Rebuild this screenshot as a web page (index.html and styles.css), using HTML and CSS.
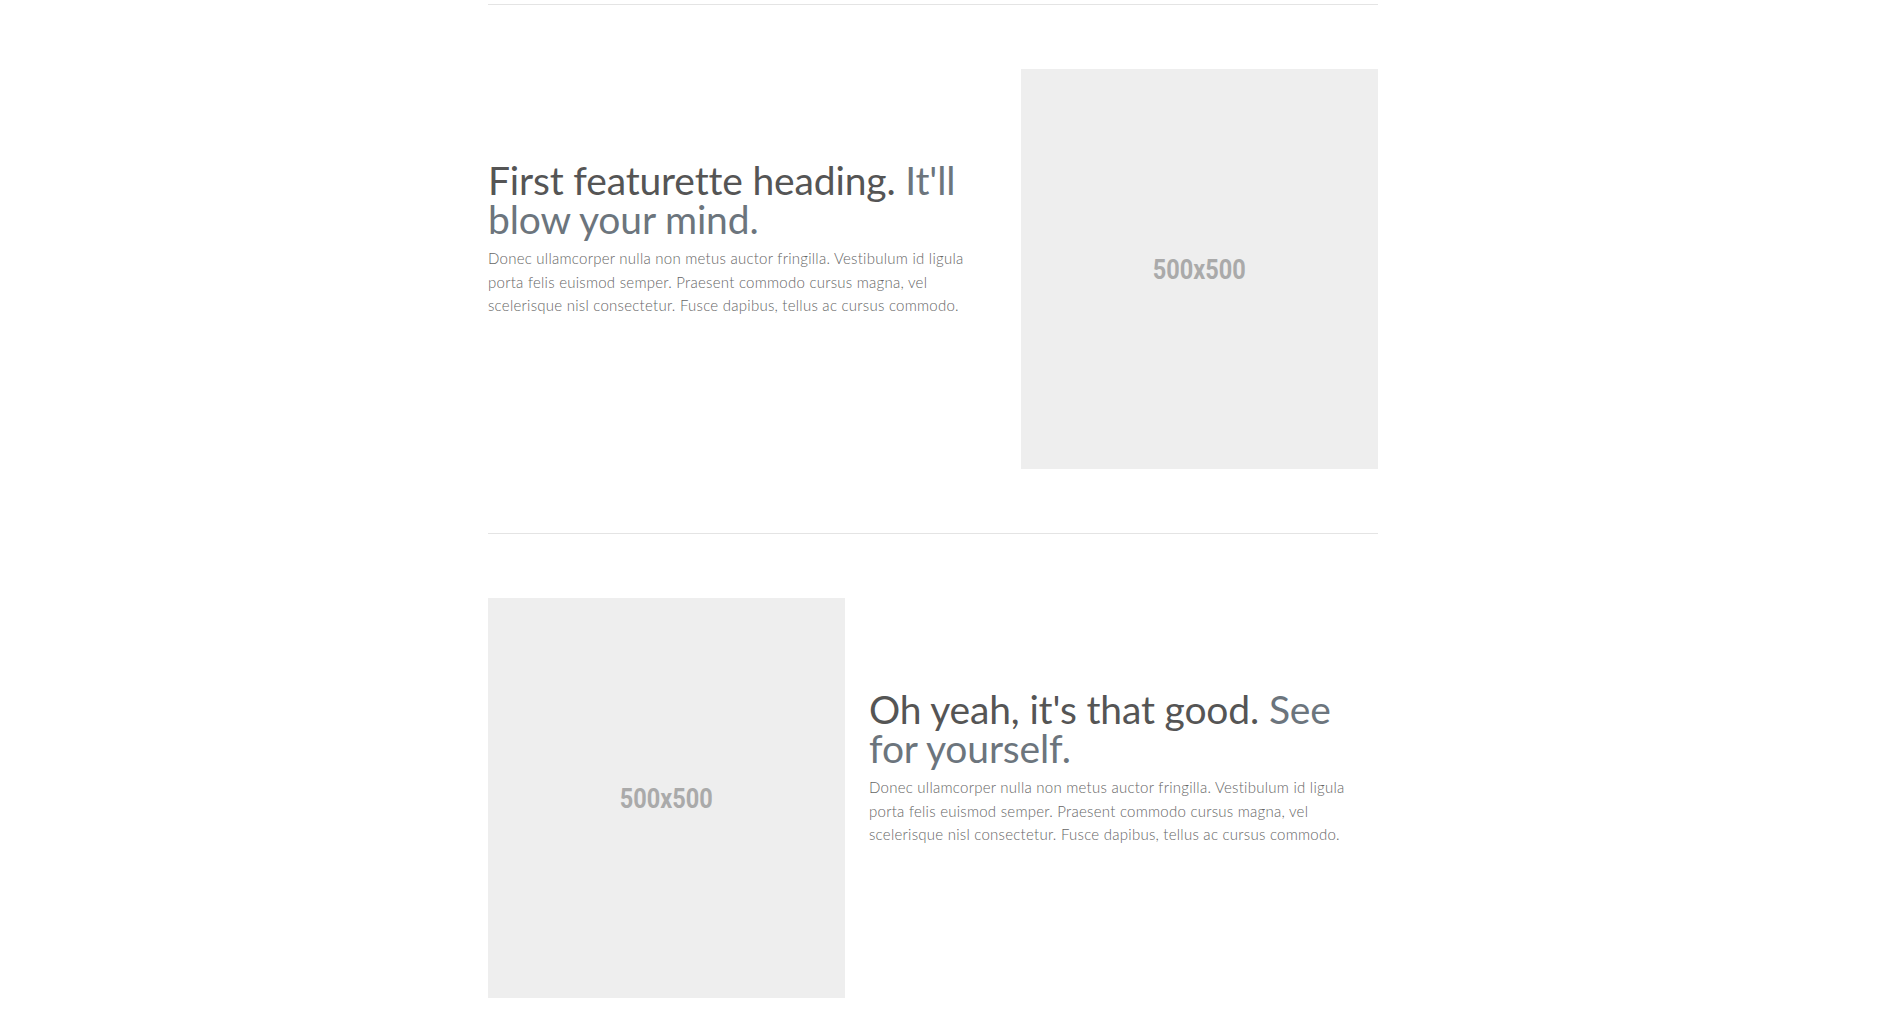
FILE: index.html
```html
<!DOCTYPE html>
<html lang="en">
<head>
<meta charset="utf-8">
<title>Featurettes</title>
<link rel="stylesheet" href="styles.css">
</head>
<body>
<main class="container">
  <hr class="divider divider-top">
  <div class="featurette">
    <div class="feat-text">
      <h2 class="feat-heading">First featurette heading. <span class="muted">It'll blow your mind.</span></h2>
      <p class="feat-lead">Donec ullamcorper nulla non metus auctor fringilla. Vestibulum id ligula porta felis euismod semper. Praesent commodo cursus magna, vel scelerisque nisl consectetur. Fusce dapibus, tellus ac cursus commodo.</p>
    </div>
    <div class="feat-media">
      <div class="placeholder"><span>500x500</span></div>
    </div>
  </div>
  <hr class="divider">
  <div class="featurette featurette-reverse">
    <div class="feat-text">
      <h2 class="feat-heading">Oh yeah, it's that good. <span class="muted">See for yourself.</span></h2>
      <p class="feat-lead">Donec ullamcorper nulla non metus auctor fringilla. Vestibulum id ligula porta felis euismod semper. Praesent commodo cursus magna, vel scelerisque nisl consectetur. Fusce dapibus, tellus ac cursus commodo.</p>
    </div>
    <div class="feat-media">
      <div class="placeholder"><span>500x500</span></div>
    </div>
  </div>
</main>
</body>
</html>
```
FILE: styles.css
```css
* { box-sizing: border-box; }
html, body { margin: 0; padding: 0; background: #fff; }
body {
  font-family: Lato, "Open Sans", sans-serif;
  color: #555;
}
.container {
  width: 890px;
  margin-left: 488px;
}
.divider {
  border: 0;
  border-top: 1px solid #e4e4e4;
  margin: 64px 0;
}
.divider-top { margin-top: 4px; }
.featurette {
  display: grid;
  grid-template-columns: 509px 357px;
  column-gap: 24px;
  align-items: start;
}
.featurette-reverse {
  grid-template-columns: 357px 509px;
}
.featurette-reverse .feat-text { order: 2; }
.featurette-reverse .feat-media { order: 1; }
.feat-heading {
  margin: 92px 0 0;
  font-size: 39px;
  font-weight: 400;
  line-height: 39px;
  letter-spacing: -0.15px;
  color: #555;
}
.muted { color: #6c757d; }
.feat-lead {
  margin: 8px 0 0;
  max-width: 490px;
  font-size: 15px;
  font-weight: 300;
  line-height: 23.5px;
  letter-spacing: 0.25px;
  color: #666;
}
.placeholder {
  height: 400px;
  background: #eeeeee;
  display: flex;
  align-items: center;
  justify-content: center;
}
.placeholder span {
  display: inline-block;
  font-family: Roboto, "Liberation Sans", sans-serif;
  font-weight: 700;
  font-size: 28px;
  color: #aaa;
  transform: scaleX(0.84);
}
```
